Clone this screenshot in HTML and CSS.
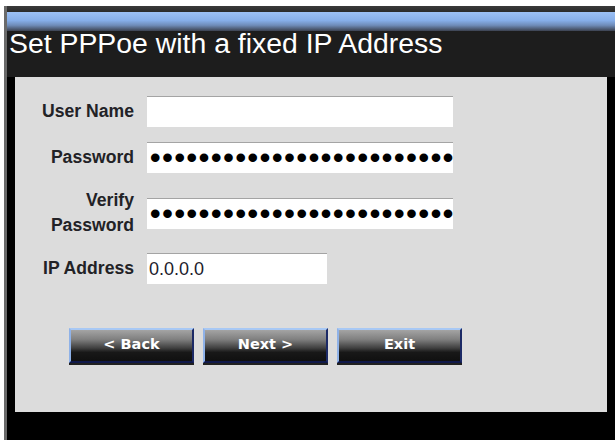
FILE: index.html
```html
<!DOCTYPE html>
<html>
<head>
<meta charset="utf-8">
<link rel="stylesheet" href="styles.css">
</head>
<body>
<div class="window">
  <div class="topline"></div>
  <div class="bluebar"></div>
  <div class="title">Set PPPoe with a fixed IP Address</div>
  <div class="panel">
    <div class="form">
      <div class="label">User Name</div>
      <div class="field wide"></div>
      <div class="label">Password</div>
      <div class="field wide dots">••••••••••••••••••••••••••</div>
      <div class="label">Verify<br>Password</div>
      <div class="field wide dots">••••••••••••••••••••••••••</div>
      <div class="label">IP Address</div>
      <div class="field narrow value">0.0.0.0</div>
    </div>
    <div class="buttons">
      <div class="btn">&lt; Back</div>
      <div class="btn">Next &gt;</div>
      <div class="btn">Exit</div>
    </div>
  </div>
</div>
</body>
</html>
```
FILE: styles.css
```css
html, body {
  margin: 0;
  padding: 0;
  background: #ffffff;
}
body {
  height: 440px;
  overflow: hidden;
  font-family: "Liberation Sans", Arial, sans-serif;
}
.window {
  margin: 6px 0 0 4px;
  height: 434px;
  background: #000000;
  border-left: 3px solid #6a6a6a;
  display: flex;
  flex-direction: column;
}
.topline {
  height: 6px;
  background: linear-gradient(#3a3a3a, #2a2a2a);
}
.bluebar {
  height: 19px;
  background: linear-gradient(#9cc0f4 0%, #86aee8 45%, #6f8cb8 70%, #3c4250 100%);
}
.title {
  height: 46px;
  background: #1d1d1d;
  color: #ffffff;
  font-size: 28.4px;
  line-height: 25px;
  padding-left: 2px;
}
.panel {
  margin-left: 8px;
  width: 592px;
  height: 335px;
  background: #dcdcdc;
}
.form {
  display: grid;
  grid-template-columns: 119px auto;
  column-gap: 13px;
  row-gap: 15px;
  padding-top: 19px;
  align-items: center;
}
.label {
  text-align: right;
  font-weight: bold;
  font-size: 17.6px;
  line-height: 25px;
  color: #222226;
}
.field {
  height: 30px;
  background: #ffffff;
  border-top: 1px solid #a4a4a4;
  box-sizing: content-box;
  overflow: hidden;
  white-space: nowrap;
}
.wide {
  width: 306px;
}
.narrow {
  width: 180px;
}
.dots {
  font-family: "Liberation Sans", Arial, sans-serif;
  font-weight: bold;
  font-size: 30px;
  line-height: 30px;
  letter-spacing: 1.7px;
  color: #000000;
  padding-left: 3px;
  width: 303px;
}
.value {
  font-size: 18px;
  line-height: 30px;
  color: #1c1c2c;
  padding-left: 2px;
  width: 178px;
}
.buttons {
  display: flex;
  gap: 9px;
  margin-top: 44px;
  padding-left: 54px;
}
.btn {
  width: 121px;
  height: 31px;
  border-top: 2px solid #a8c8f4;
  border-left: 2px solid #8fb2e8;
  border-right: 2px solid #1c2a66;
  border-bottom: 2px solid #10194a;
  background: linear-gradient(#a4a4a4 0%, #808080 30%, #404040 58%, #181818 72%, #101010 100%);
  color: #ffffff;
  font-family: "DejaVu Sans", sans-serif;
  font-weight: bold;
  font-size: 14.5px;
  line-height: 29px;
  text-align: center;
  box-shadow: 0 2px 0 #202020;
}
```
